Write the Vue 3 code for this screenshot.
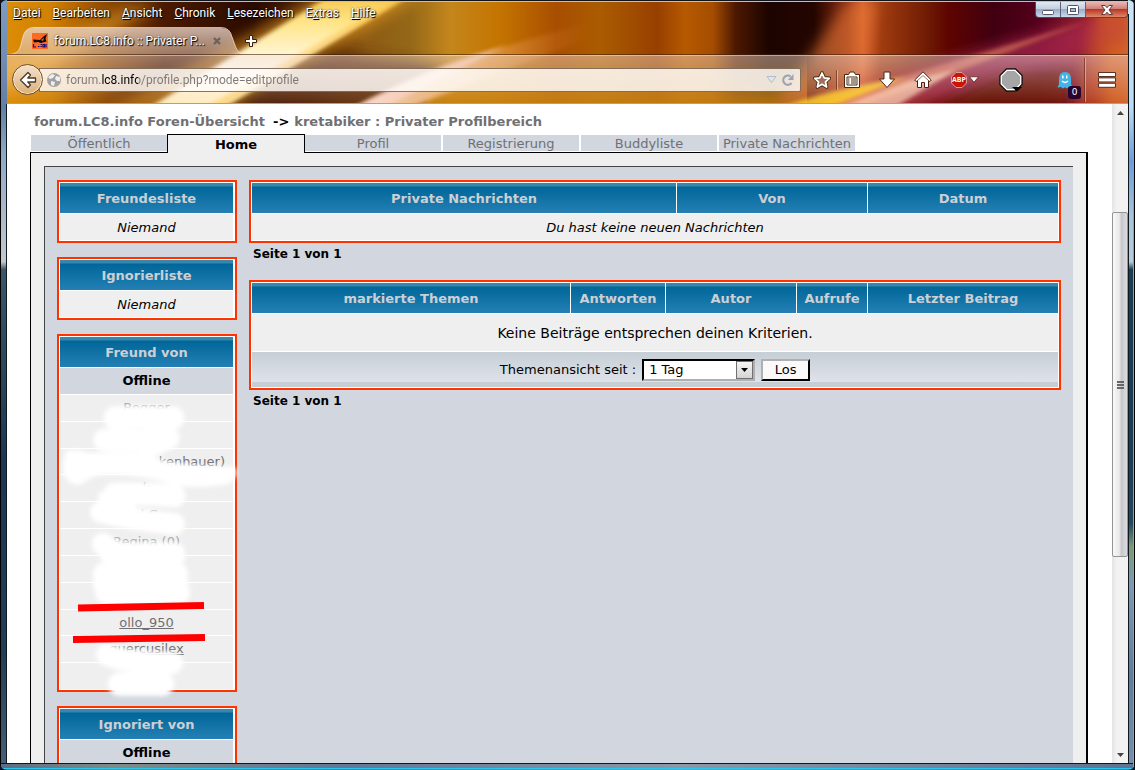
<script setup>
import { ref } from 'vue'

const menus = [
  ['', 'D', 'atei'],
  ['', 'B', 'earbeiten'],
  ['', 'A', 'nsicht'],
  ['', 'C', 'hronik'],
  ['', 'L', 'esezeichen'],
  ['E', 'x', 'tras'],
  ['', 'H', 'ilfe'],
]
const tabs = ['Öffentlich', 'Home', 'Profil', 'Registrierung', 'Buddyliste', 'Private Nachrichten']
const activeTab = ref('Home')
const friends = [
  { name: 'Bogger' },
  { name: 'l t' },
  { name: 'kenhauer)', right: true },
  { name: 'k' },
  { name: 'rkC' },
  { name: 'Regina (0)' },
  { name: '' },
  { name: '' },
  { name: 'ollo_950', clear: true },
  { name: 'quercusilex', clear: true },
  { name: '' },
]
const address = ref('forum.lc8.info/profile.php?mode=editprofile')
const since = ref('1 Tag')
</script>

<template>
  <div class="window">
    <header class="chrome">
      <svg class="theme" viewBox="0 0 1121 102" preserveAspectRatio="none" aria-hidden="true">
        <defs>
          <linearGradient id="base">
            <stop offset="0" stop-color="#dc8c04" />
            <stop offset=".04" stop-color="#d08004" />
            <stop offset=".09" stop-color="#8a4600" />
            <stop offset=".14" stop-color="#4a1a00" />
            <stop offset=".22" stop-color="#2a0a00" />
            <stop offset=".27" stop-color="#4c2004" />
            <stop offset=".32" stop-color="#8c5a14" />
            <stop offset=".36" stop-color="#946818" />
            <stop offset=".395" stop-color="#c4861c" />
            <stop offset=".44" stop-color="#c47400" />
            <stop offset=".49" stop-color="#a84e00" />
            <stop offset=".53" stop-color="#aa5c00" />
            <stop offset=".58" stop-color="#983f00" />
            <stop offset=".605" stop-color="#b65a00" />
            <stop offset=".63" stop-color="#a44c00" />
            <stop offset=".65" stop-color="#4c1800" />
            <stop offset=".68" stop-color="#1c0400" />
            <stop offset=".72" stop-color="#240600" />
            <stop offset=".75" stop-color="#8a2c14" />
            <stop offset=".763" stop-color="#d8602c" />
            <stop offset=".78" stop-color="#a03c10" />
            <stop offset=".82" stop-color="#701c04" />
            <stop offset=".84" stop-color="#5e0400" />
            <stop offset=".88" stop-color="#400010" />
            <stop offset=".92" stop-color="#54001c" />
            <stop offset=".97" stop-color="#98242a" />
            <stop offset=".985" stop-color="#c85824" />
            <stop offset="1" stop-color="#d06a38" />
          </linearGradient>
          <linearGradient id="low" x1="0" y1="0" x2="0" y2="1">
            <stop offset=".5" stop-color="#c88008" stop-opacity="0" />
            <stop offset="1" stop-color="#c88008" stop-opacity=".85" />
          </linearGradient>
          <linearGradient id="beam" x1="0" y1="1" x2="0" y2="0">
            <stop offset="0" stop-color="#ffe9b4" />
            <stop offset=".35" stop-color="#fffdf4" />
            <stop offset=".75" stop-color="#ffe68c" />
            <stop offset="1" stop-color="#f6c850" />
          </linearGradient>
          <linearGradient id="flame">
            <stop offset="0" stop-color="#ffe4d0" />
            <stop offset=".45" stop-color="#f4b070" stop-opacity=".8" />
            <stop offset="1" stop-color="#d07020" stop-opacity="0" />
          </linearGradient>
          <filter id="soft2" x="-20%" y="-40%" width="140%" height="180%"><feGaussianBlur stdDeviation="2" /></filter>
          <filter id="soft7" x="-30%" y="-60%" width="160%" height="220%"><feGaussianBlur stdDeviation="7" /></filter>
        </defs>
        <rect width="1121" height="102" fill="url(#base)" />
        <rect x="420" y="0" width="380" height="102" fill="url(#low)" />
        <path d="M-20 70 120 5 150 5 0 90Z" fill="#f2ac30" opacity=".5" filter="url(#soft7)" />
        <path d="M95 112 320 -10 420 -10 225 112Z" fill="#e49a20" opacity=".6" filter="url(#soft7)" />
        <path d="M225 108 330 50 440 66 380 108Z" fill="#5c2a10" opacity=".85" filter="url(#soft7)" />
        <path d="M140 108 322 -6 402 -6 214 108Z" fill="url(#beam)" filter="url(#soft2)" />
        <path d="M196 108 390 -4 398 -4 212 108Z" fill="#ffc040" opacity=".5" filter="url(#soft2)" />
        <path d="M345 108Q430 60 580 22L585 36Q480 75 400 108Z" fill="url(#flame)" filter="url(#soft2)" />
        <path d="M345 108Q420 66 500 44Q420 84 375 108Z" fill="#ffd8d0" opacity=".6" filter="url(#soft2)" />
        <path d="M840 0 770 102 850 102 870 0Z" fill="#e27636" opacity=".6" filter="url(#soft7)" />
        <path d="M760 112 900 70 1121 5 1121 40 940 100 860 112Z" fill="#b02c54" opacity=".65" filter="url(#soft7)" />
        <path d="M800 106 900 74 1080 20 920 82 850 106Z" fill="#f08c60" opacity=".55" filter="url(#soft2)" />
        <path d="M770 108Q820 88 900 76L850 96 820 108Z" fill="#ffcf24" opacity=".85" filter="url(#soft2)" />
        <path d="M825 108 900 80 950 68 885 108Z" fill="#ffd8b8" opacity=".7" filter="url(#soft2)" />
        <path d="M915 112 1000 72 1060 70 1060 112Z" fill="#6e1200" opacity=".8" filter="url(#soft7)" />
        <path d="M1070 108 1090 0 1130 0 1130 108Z" fill="#d8621c" opacity=".5" filter="url(#soft7)" />
      </svg>

      <div class="topline">
        <nav class="menubar">
          <a v-for="m in menus" :key="m[2]" href="#">{{ m[0] }}<u>{{ m[1] }}</u>{{ m[2] }}</a>
        </nav>
        <div class="winbuttons">
          <button type="button" aria-label="Minimieren">
            <svg width="14" height="12" viewBox="0 0 14 12"><rect x="1.500" y="6.500" width="11" height="4" rx="1" fill="#fff" stroke="#535666" /></svg>
          </button>
          <button type="button" aria-label="Maximieren">
            <svg width="14" height="12" viewBox="0 0 14 12"><rect x="1.500" y="1.500" width="11" height="9" rx="1" fill="#fff" stroke="#535666" /><rect x="4.500" y="4.500" width="5" height="3" fill="#9fc0dc" stroke="#535666" /></svg>
          </button>
          <button type="button" class="close" aria-label="Schließen">
            <svg width="14" height="12" viewBox="0 0 14 12"><path d="M1.500 1.500h3.500l2 2.200 2-2.200h3.500L9 6l3.500 4.500H9L7 8.300 5 10.500H1.500L5 6Z" fill="#fff" stroke="#5b3a3f" /></svg>
          </button>
        </div>
      </div>

      <div class="tabstrip">
        <div class="browsertab">
          <svg class="tabshape" width="240" height="30" viewBox="0 0 240 30" aria-hidden="true">
            <defs>
              <linearGradient id="tabfill" x1="0" y1="0" x2="0" y2="1">
                <stop offset="0" stop-color="#ead4c8" stop-opacity=".8" />
                <stop offset="1" stop-color="#e2c4ae" stop-opacity=".55" />
              </linearGradient>
            </defs>
            <path d="M0 28C14 28 13 20 16 10Q18 1 27 1H214Q223 1 225 10C229 20 229 28 240 28V28H0Z" fill="url(#tabfill)" />
            <path d="M0 27.500C14 27.500 13 20 16 10Q18 .5 27 .5H214Q223 .5 225 10C229 20 229 27.500 240 27.500" fill="none" stroke="#f8e8d8" stroke-opacity=".75" />
          </svg>
          <svg class="favicon" width="16" height="16" viewBox="0 0 16 16" aria-hidden="true">
            <rect width="16" height="16" fill="#ff6a20" />
            <path d="M1 6.500 8 7 12 3 15 1 13.500 6 14.500 8.500 9 10 6 9 2 9.500Z" fill="#0c0c10" />
            <path d="M9 7 12 5 11 8Z" fill="#ff6a20" />
            <path d="M1.500 11V14H4M6 13.500H7.500M8.500 11.500H10M8.500 13.500H10M11 11.500H12.500V14H11ZM14 11V14.500" stroke="#10108c" stroke-width="1.200" fill="none" />
          </svg>
          <span class="tabtitle">forum.LC8.info :: Privater P...</span>
          <button type="button" class="tabclose" aria-label="Tab schließen">
            <svg width="10" height="10" viewBox="0 0 10 10"><path d="M2 2 8 8M8 2 2 8" stroke="#6b625e" stroke-width="2.400" /></svg>
          </button>
        </div>
        <button type="button" class="newtab" aria-label="Neuer Tab">
          <svg width="12" height="12" viewBox="0 0 12 12"><path d="M4.500 .5h3v4h4v3h-4v4h-3v-4h-4v-3h4Z" fill="#fff" stroke="#3a2010" /></svg>
        </button>
      </div>

      <div class="toolbar">
        <button type="button" class="back" aria-label="Zurück">
          <svg width="18" height="18" viewBox="0 0 18 18"><path d="M9 1.500 11.500 4 8.800 7H16.500V11H8.800L11.500 14 9 16.500 1.500 9Z" fill="#fff" stroke="#4a3a28" stroke-width="1.300" stroke-linejoin="round" /></svg>
        </button>
        <div class="urlbar">
          <svg width="16" height="16" viewBox="0 0 16 16" aria-hidden="true">
            <circle cx="8" cy="8" r="7" fill="#a2a2a4" />
            <path d="M2 5 6 2 9 3 7 6 4 7ZM10 4 14 5 14 9 11 9 9 7ZM5 9 9 10 8 14 5 13Z" fill="#f2eeec" />
          </svg>
          <input v-model="address" type="text" aria-label="Adresse" spellcheck="false" />
          <svg width="11" height="9" viewBox="0 0 11 9" aria-hidden="true"><path d="M1 1.500H10L5.500 7.500Z" fill="#e4e4ea" stroke="#b4bcc8" /></svg>
          <button type="button" aria-label="Neu laden">
            <svg width="14" height="14" viewBox="0 0 14 14"><path d="M10.500 10A4.600 4.600 0 1 1 9.500 3.400" fill="none" stroke="#9ba5b2" stroke-width="2.200" /><path d="M12.500 1V7H6.800Z" fill="#9ba5b2" /></svg>
          </button>
        </div>
        <div class="tools">
          <button type="button" aria-label="Lesezeichen hinzufügen">
            <svg width="18" height="18" viewBox="0 0 18 18"><path d="M9 2 11.200 6.800 16.300 7.300 12.500 10.800 13.600 16 9 13.300 4.400 16 5.500 10.800 1.700 7.300 6.800 6.800Z" fill="none" stroke="#4a2810" stroke-width="3.600" stroke-linejoin="round" /><path d="M9 2 11.200 6.800 16.300 7.300 12.500 10.800 13.600 16 9 13.300 4.400 16 5.500 10.800 1.700 7.300 6.800 6.800Z" fill="#a07058" stroke="#fff" stroke-width="1.800" stroke-linejoin="round" /></svg>
          </button>
          <i class="bar short"></i>
          <button type="button" aria-label="Lesezeichen anzeigen">
            <svg width="18" height="18" viewBox="0 0 18 18"><path d="M1.500 3.500H5.500L7 1H11L12.500 3.500H16.500V16.500H1.500Z" fill="#fff" stroke="#4a2810" /><path d="M4 6H14V14H4Z" fill="#fff" stroke="#4a2810" /><path d="M5 8H6.500M5 10H6.500M5 12H6.500M8 8H13M8 10H13M8 12H13" stroke="#4a2810" /></svg>
          </button>
          <button type="button" class="t-down" aria-label="Downloads">
            <svg width="18" height="18" viewBox="0 0 18 18"><path d="M6 1H12V8H16.500L9 16.500 1.500 8H6Z" fill="#fff" stroke="#4a2810" stroke-linejoin="round" /></svg>
          </button>
          <button type="button" class="t-home" aria-label="Startseite">
            <svg width="18" height="18" viewBox="0 0 18 18"><path d="M9 .8 17.300 9 15.800 10.600 14.500 9.500V16.500H10.500V11.500H7.500V16.500H3.500V9.500L2.200 10.600.7 9Z" fill="#fff" stroke="#4a2010" /><path d="M3.500 9.500 9 4.500 14.500 9.500" fill="none" stroke="#8a5040" stroke-width=".8" /></svg>
          </button>
          <button type="button" class="t-abp" aria-label="Adblock Plus">
            <span class="abp"><svg width="16" height="16" viewBox="0 0 16 16"><path d="M5 .5H11L15.500 5V11L11 15.500H5L.5 11V5Z" fill="#c91408" stroke="#d8a098" /></svg><b>ABP</b></span>
            <svg width="10" height="7" viewBox="0 0 10 7"><path d="M.5 .8H9.500L5 6.200Z" fill="#fff" stroke="#4a2010" stroke-width=".7" /></svg>
          </button>
          <button type="button" class="t-stop" aria-label="Blocker">
            <svg width="24" height="24" viewBox="0 0 24 24"><path d="M7.500 1H16.500L23 7.500V16.500L16.500 23H7.500L1 16.500V7.500Z" fill="#a6a6a6" stroke="#111" stroke-width="1.400" /><path d="M8 2.300H16L21.700 8V16L16 21.700H8L2.300 16V8Z" fill="none" stroke="#fff" stroke-width="1.200" /><path d="M13 19H23L18 23.500Z" fill="#000" /></svg>
          </button>
          <button type="button" class="t-ghost" aria-label="Ghostery">
            <svg width="16" height="18" viewBox="0 0 16 18"><path d="M2 8Q2 1 8 1T14 8V13L15.500 16.500 12 16 10 17.500 8 16.300 6 17.500 4 16 .5 16.500 2 13Z" fill="#44b4e8" /><path d="M5.800 4.500V7.500M9.700 4.500V7.500" stroke="#fff" stroke-width="1.500" /><path d="M5 10Q8 13 11 10" fill="none" stroke="#fff" stroke-width="1.200" /></svg>
            <span class="count">0</span>
          </button>
          <i class="bar tall"></i>
          <button type="button" aria-label="Menü">
            <svg width="18" height="16" viewBox="0 0 18 16"><path d="M.5 .5H17.500V4.500H.5ZM.5 5.900H17.500V9.900H.5ZM.5 11.300H17.500V15.300H.5Z" fill="#fff" stroke="#4a2010" stroke-width=".9" /></svg>
          </button>
        </div>
      </div>
    </header>

    <div class="viewport">
      <main class="page">
        <p class="crumbs"><a href="#">forum.LC8.info Foren-Übersicht</a><span>-&gt;</span><a href="#">kretabiker : Privater Profilbereich</a></p>
        <nav class="tabs">
          <a v-for="t in tabs" :key="t" href="#" :class="{ active: t === activeTab }" @click.prevent="activeTab = t">{{ t }}</a>
        </nav>
        <div class="panel">
          <div class="inner">
            <aside class="side">
              <section class="box">
                <h2>Freundesliste</h2>
                <p class="none">Niemand</p>
              </section>
              <section class="box">
                <h2>Ignorierliste</h2>
                <p class="none">Niemand</p>
              </section>
              <section class="box">
                <h2>Freund von</h2>
                <h3>Offline</h3>
                <ul>
                  <li v-for="(f, i) in friends" :key="i" :class="{ right: f.right, clear: f.clear }"><a v-if="f.name" href="#">{{ f.name }}</a></li>
                </ul>
                <svg class="marks" width="190" height="366" viewBox="57 334 190 366" aria-hidden="true">
                  <defs><filter id="brush" x="-10%" y="-10%" width="120%" height="120%"><feGaussianBlur stdDeviation="2.200" /></filter></defs>
                  <g filter="url(#brush)" fill="#fff" stroke="#fff" stroke-linecap="round" stroke-linejoin="round">
                    <path d="M115 418Q145 416 173 418" fill="none" stroke-width="23" />
                    <path d="M105 440Q135 442 168 438L150 446" fill="none" stroke-width="23" />
                    <path d="M66 452Q76 448 86 453H145Q165 467 233 467Q241 473 229 483Q205 489 175 485Q140 473 105 474Q90 475 82 484Q66 486 63 470Z" />
                    <path d="M115 494Q145 493 174 496" fill="none" stroke-width="23" />
                    <path d="M101 512Q135 520 174 524" fill="none" stroke-width="22" />
                    <path d="M100 492H135V512L98 504Z" />
                    <path d="M103 544Q120 558 174 556M110 553H174" fill="none" stroke-width="22" />
                    <path d="M105 574H176M107 592H178M105 583H176" fill="none" stroke-width="24" />
                    <path d="M107 655Q130 663 172 663" fill="none" stroke-width="22" />
                    <path d="M120 684H162" fill="none" stroke-width="24" />
                  </g>
                  <path d="M78 608 204 605.500M73 639.500 205 637.500" stroke="#f00" stroke-width="7" />
                </svg>
              </section>
              <section class="box">
                <h2>Ignoriert von</h2>
                <h3>Offline</h3>
              </section>
            </aside>

            <div class="content">
              <table>
                <colgroup><col /><col class="w190" /><col class="w190" /></colgroup>
                <thead><tr><th>Private Nachrichten</th><th>Von</th><th>Datum</th></tr></thead>
                <tbody><tr><td colspan="3" class="none">Du hast keine neuen Nachrichten</td></tr></tbody>
              </table>
              <p class="pager">Seite 1 von 1</p>
              <table>
                <colgroup><col /><col class="w94" /><col class="w130" /><col class="w70" /><col class="w190" /></colgroup>
                <thead><tr><th>markierte Themen</th><th>Antworten</th><th>Autor</th><th>Aufrufe</th><th>Letzter Beitrag</th></tr></thead>
                <tbody>
                  <tr><td colspan="5" class="empty">Keine Beiträge entsprechen deinen Kriterien.</td></tr>
                  <tr>
                    <td colspan="5" class="filter">
                      <form @submit.prevent>
                        <label for="since">Themenansicht seit :</label>
                        <span class="select">
                          <select id="since" v-model="since"><option>1 Tag</option><option>7 Tage</option><option>1 Monat</option></select>
                          <i><svg width="7" height="4" viewBox="0 0 7 4"><path d="M0 0H7L3.500 4Z" /></svg></i>
                        </span>
                        <button type="submit">Los</button>
                      </form>
                    </td>
                  </tr>
                </tbody>
              </table>
              <p class="pager">Seite 1 von 1</p>
            </div>
          </div>
        </div>
      </main>
      <div class="scrollbar" aria-hidden="true">
        <span><svg width="7" height="4" viewBox="0 0 7 4"><path d="M0 4H7L3.500 0Z" fill="#444" /></svg></span>
        <div class="track"><div class="thumb"><i></i><i></i><i></i></div></div>
        <span><svg width="7" height="4" viewBox="0 0 7 4"><path d="M0 0H7L3.500 4Z" fill="#444" /></svg></span>
      </div>
    </div>
  </div>
</template>

<style>
body {
  margin: 0;
  background: #10141c;
}
</style>

<style scoped>
* {
  box-sizing: border-box;
}
.window {
  display: flex;
  flex-direction: column;
  height: 100vh;
  overflow: hidden;
  padding: 1px 7px 7px;
  border-radius: 7px;
  font-family: "DejaVu Sans", Verdana, sans-serif;
  font-size: 13px;
  background:
    linear-gradient(#000, #000) left / 1px 100% no-repeat,
    linear-gradient(#000, #000) right / 1px 100% no-repeat,
    linear-gradient(#28c8f0, #28c8f0) right 1px top / 1px 100% no-repeat,
    linear-gradient(#101820, #101820) right 6px bottom 6px / 1px calc(100% - 20px) no-repeat,
    linear-gradient(#101820, #101820) left 6px bottom 6px / 1px calc(100% - 110px) no-repeat,
    linear-gradient(#28c8f0, #28c8f0) left bottom 1px / 100% 1px no-repeat,
    linear-gradient(#101820, #101820) left bottom 6px / 100% 1px no-repeat,
    linear-gradient(90deg, #5a6e86, #7c8c88 10%, #5f7898 30%, #8a98a8 60%, #5c7494) bottom / 100% 6px no-repeat,
    linear-gradient(#7e9cc0, #647fa6 14%, #8fa8c6 20%, #c4c8cc 34%, #3c5668 35%, #2c4658 48%, #1c3558 60%, #243c54 85%, #4a6078) left / 7px 100% no-repeat,
    linear-gradient(#cde4f4, #b8dcf4 14%, #6c9cd8 21%, #a8c4d8 28%, #b8ccd8 34%, #1c3c50 35%, #1c3c58 60%, #22485c 68%, #7c9878 71%, #8098b0 76%, #607c9c 88%, #7890ac) right / 7px 100% no-repeat;
}
a {
  color: inherit;
  text-decoration: none;
}
button {
  padding: 0;
  border: 0;
  background: none;
  font: inherit;
}
svg {
  display: block;
}
p,
h2,
h3,
ul {
  margin: 0;
  padding: 0;
}

.chrome {
  position: relative;
  flex: none;
  border-top: 1px solid #d8b8a8;
  border-bottom: 1px solid #a8a09a;
  font-family: Roboto, "Open Sans", sans-serif;
  font-size: 12px;
}
.theme {
  position: absolute;
  inset: 0;
  width: 100%;
  height: 100%;
}
.topline {
  position: relative;
  display: flex;
  justify-content: space-between;
  height: 25px;
}
.menubar {
  display: flex;
  gap: 12px;
  padding-left: 6px;
  line-height: 22px;
  color: #fff;
  text-shadow: 1px 1px 1px #000, 0 0 2px rgba(0, 0, 0, 0.7);
}
.winbuttons {
  display: flex;
  height: 16px;
  border: 1px solid #4c4854;
  border-top: 0;
  border-radius: 0 0 4px 4px;
  overflow: hidden;
}
.winbuttons button {
  display: grid;
  place-items: center;
  width: 25px;
  border-right: 1px solid #5c6474;
  background: linear-gradient(#e0e8f2, #c4d0e0 45%, #98aec8 50%, #c8dcf0);
}
.winbuttons .close {
  width: 41px;
  border-right: 0;
  background: linear-gradient(#e8b8b0, #d08078 45%, #b83828 50%, #e08868);
}
.tabstrip {
  position: relative;
  display: flex;
  align-items: center;
  height: 28px;
}
.browsertab {
  position: relative;
  display: flex;
  align-items: center;
  width: 234px;
  height: 28px;
  padding-left: 25px;
}
.tabshape {
  position: absolute;
  left: 0;
  top: 0;
}
.favicon,
.tabtitle,
.tabclose {
  position: relative;
}
.tabtitle {
  width: 156px;
  margin: 0 2px 0 6px;
  white-space: nowrap;
  color: #fff;
  text-shadow: 1px 1px 1px #000, 0 0 2px rgba(0, 0, 0, 0.6);
}
.newtab {
  margin-left: 4px;
}
.toolbar {
  position: relative;
  display: flex;
  align-items: center;
  height: 48px;
  padding: 0 12px 0 5px;
  border-top: 1px solid rgba(255, 230, 215, 0.7);
  background: linear-gradient(rgba(240, 220, 215, 0.45), rgba(240, 220, 215, 0.02));
  box-shadow: 0 -1px 0 rgba(60, 30, 10, 0.6);
}
.back {
  position: relative;
  z-index: 1;
  display: grid;
  flex: none;
  place-items: center;
  width: 31px;
  height: 31px;
  border: 1px solid #70502c;
  border-radius: 50%;
  background: linear-gradient(#f4e2cc, #dcb078);
  box-shadow: inset 0 0 0 1px #f8e8d4;
}
.urlbar {
  display: flex;
  flex: 1;
  align-items: center;
  gap: 4px;
  height: 24px;
  margin-left: -4px;
  padding: 0 5px 0 6px;
  border: 1px solid rgba(70, 45, 20, 0.65);
  border-radius: 0 2px 2px 0;
  background: rgba(255, 252, 248, 0.84);
}
.urlbar input {
  flex: 1;
  min-width: 0;
  padding: 0;
  border: 0;
  outline: 0;
  font: inherit;
  color: transparent;
  background: linear-gradient(90deg, #7c7874 36px, #000 36px 72px, #7c7874 72px);
  background-clip: text;
}
.tools {
  display: flex;
  align-items: center;
  padding-left: 12px;
}
.bar {
  width: 2px;
  border-left: 1px solid rgba(90, 40, 20, 0.6);
  border-right: 1px solid rgba(255, 220, 200, 0.5);
}
.short {
  height: 20px;
  margin: 0 5px;
}
.tall {
  height: 44px;
  margin: 0 12px 0 11px;
}
.t-down {
  margin-left: 17px;
}
.t-home {
  margin-left: 18px;
}
.t-abp {
  display: flex;
  align-items: center;
  gap: 2px;
  margin-left: 19px;
}
.abp {
  position: relative;
}
.abp b {
  position: absolute;
  inset: 0;
  font: bold 7px/16px "Open Sans", sans-serif;
  text-align: center;
  color: #fff;
}
.t-stop {
  margin-left: 20px;
}
.t-ghost {
  position: relative;
  margin-left: 34px;
}
.count {
  position: absolute;
  left: 11px;
  top: 15px;
  width: 13px;
  height: 13px;
  border-radius: 3px;
  font: 9px/13px "DejaVu Sans", sans-serif;
  color: #fff;
  background: #2a0430;
}

.viewport {
  display: flex;
  flex: 1;
  min-height: 0;
  background: #fff;
}
.page {
  flex: 1;
  min-width: 0;
  padding: 9px 24px 0 23px;
  overflow: hidden;
}
.crumbs {
  padding-left: 4px;
  line-height: 18px;
  font-weight: bold;
  color: #707074;
}
.crumbs span {
  margin: 0 5px 0 8px;
  color: #000;
}
.tabs {
  position: relative;
  display: flex;
  gap: 2px;
  align-items: flex-start;
  height: 19px;
  margin: 3px 0 -1px;
  padding-left: 1px;
}
.tabs a {
  flex: none;
  width: 136px;
  height: 16px;
  margin-top: 1px;
  line-height: 17px;
  text-align: center;
  color: #707074;
  background: #d1d6df;
}
.tabs .active {
  width: 138px;
  height: 19px;
  margin: 0 -2px;
  border: 1px solid #000;
  border-bottom: 0;
  font-weight: bold;
  line-height: 19px;
  color: #000;
  background: #efefef;
}
.panel {
  padding: 13px 13px 0;
  border: 1px solid #000;
  border-right-width: 2px;
  background: #efefef;
}
.inner {
  display: flex;
  gap: 12px;
  align-items: flex-start;
  min-height: 640px;
  padding: 13px 12px 12px;
  border: solid #444;
  border-width: 1px 0 0 1px;
  background: #d1d6df;
}
.side {
  display: grid;
  flex: none;
  gap: 14px;
  width: 180px;
}
.box {
  position: relative;
  display: grid;
  gap: 1px;
  padding: 1px 2px 1px 1px;
  border: 2px solid #f30;
  background: #fff;
  text-align: center;
}
.box h2,
th {
  height: 30px;
  padding: 2px 0 0;
  font-size: 13px;
  font-weight: bold;
  line-height: 28px;
  color: #ccd0d4;
  background: linear-gradient(#3886ac 0 3px, #006699 4px, #2480b4);
}
.box h3 {
  font-size: 13px;
  line-height: 26px;
  background: #d1d6df;
}
.none {
  padding: 2px 0 0;
  font-style: italic;
  line-height: 24px;
  background: #efefef;
}
.box ul {
  display: grid;
  grid-auto-rows: 1fr;
  gap: 1px;
  height: 294px;
  list-style: none;
}
.box li {
  height: 100%;
  line-height: 25px;
  color: #a0a0a4;
  background: #efefef;
}
.box .clear {
  color: #707074;
}
.box .clear a {
  text-decoration: underline;
}
.box .right {
  padding-right: 8px;
  color: #707074;
  text-align: right;
}
.marks {
  position: absolute;
  left: -2px;
  top: -2px;
}
.content {
  flex: 1;
  min-width: 0;
}
table {
  width: 100%;
  border: 2px solid #f30;
  border-collapse: separate;
  border-spacing: 1px;
  table-layout: fixed;
  background: #fff;
}
td {
  padding: 0;
  text-align: center;
  background: #efefef;
}
.w190 {
  width: 190px;
}
.w130 {
  width: 130px;
}
.w94 {
  width: 94px;
}
.w70 {
  width: 70px;
}
.pager {
  padding: 2px 0 16px 4px;
  font-size: 12px;
  font-weight: bold;
  line-height: 19px;
}
.empty {
  height: 37px;
  font-size: 14px;
}
.filter {
  height: 35px;
  background: linear-gradient(#c6ced6, #dfe3e9 30px, #c5cdd5 30px);
}
.filter form {
  display: flex;
  align-items: center;
  justify-content: center;
  gap: 6px;
}
.select {
  position: relative;
}
.select select {
  display: block;
  width: 113px;
  height: 22px;
  padding: 0 5px;
  border: 2px solid;
  border-color: #000 #b0b0b0 #b0b0b0 #000;
  border-radius: 0;
  appearance: none;
  font: inherit;
  color: #000;
  background: #fff;
}
.select i {
  position: absolute;
  top: 2px;
  right: 2px;
  display: grid;
  place-items: center;
  width: 17px;
  height: 18px;
  border: 1px solid #707070;
  background: linear-gradient(#f4f4f4, #d4d4d4);
  pointer-events: none;
}
.filter button {
  width: 49px;
  height: 22px;
  border: 2px solid;
  border-color: #b0b0b0 #000 #000 #b0b0b0;
  background: #fafafa;
}
.scrollbar {
  display: flex;
  flex: none;
  flex-direction: column;
  width: 16px;
  background: linear-gradient(90deg, #e4e4e4, #f2f2f2 30%);
}
.scrollbar span {
  display: grid;
  place-items: center;
  height: 17px;
}
.track {
  display: grid;
  flex: 1;
  grid-template-rows: 91fr 345fr 189fr;
}
.thumb {
  display: flex;
  grid-row: 2;
  flex-direction: column;
  align-items: center;
  justify-content: center;
  gap: 1px;
  border: 1px solid #949494;
  border-radius: 2px;
  background: linear-gradient(90deg, #f8f8f8, #e8e8ea 45%, #c8c8cc 60%, #dcdce0);
}
.thumb i {
  width: 7px;
  height: 2px;
  background: #666;
}
</style>
